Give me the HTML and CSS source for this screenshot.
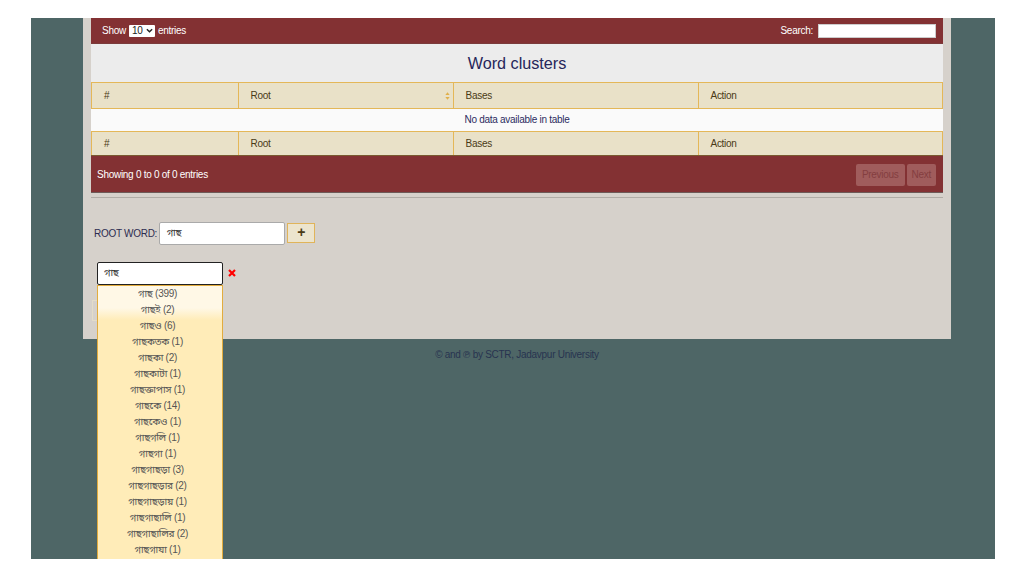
FILE: index.html
```html
<!DOCTYPE html>
<html lang="en">
<head>
<meta charset="utf-8">
<title>Word clusters</title>
<link rel="stylesheet" href="styles.css">
</head>
<body>
<div class="screen">
  <main class="card">
    <div class="toolbar">
      <label class="length">Show <span class="fake-select">10<svg class="chev" viewBox="0 0 8 5" width="7" height="5"><path d="M1 1l3 3 3-3" fill="none" stroke="#222" stroke-width="1.6"/></svg></span> entries</label>
      <label class="search">Search: <span class="search-box"></span></label>
    </div>
    <h1 class="caption">Word clusters</h1>
    <table class="grid">
      <colgroup><col class="c1"><col class="c2"><col class="c3"><col class="c4"></colgroup>
      <thead>
        <tr><th>#</th><th class="sortable">Root<svg class="sort" viewBox="0 0 6 9" width="5" height="8"><path d="M3 0l2.6 3.4H.4zM3 9L.4 5.6h5.2z" fill="#e0b04c"/></svg></th><th>Bases</th><th>Action</th></tr>
      </thead>
      <tbody>
        <tr><td colspan="4">No data available in table</td></tr>
      </tbody>
      <tfoot>
        <tr><th>#</th><th>Root</th><th>Bases</th><th>Action</th></tr>
      </tfoot>
    </table>
    <div class="pager">
      <span class="info">Showing 0 to 0 of 0 entries</span>
      <span class="pages"><span class="page-btn">Previous</span><span class="page-btn">Next</span></span>
    </div>
    <hr class="rule">
    <div class="root-row">
      <label class="root-label">ROOT WORD:</label>
      <span class="root-input">গাছ</span>
      <span class="add-btn">+</span>
    </div>
    <div class="combo">
      <span class="combo-input">গাছ</span>
      <svg class="clear" viewBox="0 0 8 8" width="8" height="8"><path d="M1 1l6 6M7 1L1 7" stroke="#f00" stroke-width="2.2" fill="none"/></svg>
      <ul class="menu">
        <li>গাছ (399)</li>
        <li>গাছই (2)</li>
        <li>গাছও (6)</li>
        <li>গাছকতক (1)</li>
        <li>গাছকা (2)</li>
        <li>গাছকাটা (1)</li>
        <li>গাছক্তাপাস (1)</li>
        <li>গাছকে (14)</li>
        <li>গাছকেও (1)</li>
        <li>গাছগলি (1)</li>
        <li>গাছগা (1)</li>
        <li>গাছগাছড়া (3)</li>
        <li>গাছগাছড়ার (2)</li>
        <li>গাছগাছড়ায় (1)</li>
        <li>গাছগাছালি (1)</li>
        <li>গাছগাছালির (2)</li>
        <li>গাছগাযা (1)</li>
      </ul>
    </div>
    <div class="ghost-btn"></div>
  </main>
  <footer class="credit">© and ℗ by SCTR, Jadavpur University</footer>
</div>
</body>
</html>
```
FILE: styles.css
```css
* { box-sizing: border-box; }
html, body { margin: 0; height: 100%; background: #fff; }
body {
  padding: 18px 29px 17px 31px;
  font-family: "Liberation Sans", "Noto Sans", "Noto Sans Bengali", sans-serif;
  font-size: 10px;
  letter-spacing: -0.28px;
  color: #2a2a55;
  overflow: hidden;
}
.screen {
  height: 541px;
  background: #4e6666;
  overflow: hidden;
  padding-left: 52px;
}
.card {
  position: relative;
  width: 868px;
  height: 321px;
  background: #d6d1cb;
  padding: 0 8px;
}
.toolbar {
  height: 26px;
  background: #833133;
  color: #fff;
  display: flex;
  justify-content: space-between;
  align-items: center;
  padding: 0 7px 1px 11px;
  border-bottom: 1px solid #7a3b3b;
}
.length, .search { display: flex; align-items: center; gap: 3px; }
.fake-select {
  display: inline-flex;
  align-items: center;
  justify-content: space-between;
  width: 26px;
  height: 12px;
  margin-top: 1px;
  background: #fff;
  color: #222;
  padding: 0 2px 0 3px;
  border-radius: 1px;
}
.search { gap: 5px; }
.search-box { width: 118px; height: 14px; margin-top: 1px; background: #fff; border: 1px solid #ccc; }
.caption {
  margin: 0;
  height: 38px;
  background: #ececec;
  color: #26265a;
  font-size: 16.2px;
  letter-spacing: 0;
  font-weight: normal;
  line-height: 38px;
  text-align: center;
}
.grid {
  width: 100%;
  table-layout: fixed;
  border-collapse: collapse;
  background: #fafafa;
}
.c1 { width: 146.5px; }
.c2 { width: 215px; }
.c3 { width: 245px; }
.grid th {
  background: #e9e1c8;
  border: 1px solid #e4b758;
  color: #4a3a16;
  font-weight: normal;
  text-align: left;
  padding: 0 12px;
  height: 26px;
  position: relative;
}
.grid thead th { padding-bottom: 1px; }
.grid tfoot th { height: 24px; border-bottom-color: #7a5a30; }
.grid td {
  height: 23px;
  text-align: center;
  padding: 0 0 1px;
  color: #2c2c60;
}
.sort { position: absolute; right: 3px; top: 9px; }
.pager {
  height: 37px;
  background: #833133;
  color: #fff;
  display: flex;
  justify-content: space-between;
  align-items: center;
  padding: 0 7px 0 6px;
  border-bottom: 1px solid #6e5a58;
}
.pages { display: flex; gap: 2px; padding-top: 2px; }
.page-btn {
  height: 22.5px;
  line-height: 22.5px;
  padding: 0 5px;
  background: #a05c5c;
  color: #843e40;
  border-radius: 2px;
}
.page-btn:first-child { padding: 0 6px; }
.rule { margin: 4px 0 0; border: 0; height: 1px; background: #b0aca6; }
.root-row {
  display: flex;
  align-items: center;
  gap: 1.5px;
  margin: 23px 0 0 3px;
  height: 24px;
}
.root-label { color: #2c2c50; }
.root-input {
  width: 126px;
  height: 23px;
  line-height: 20px;
  background: #fff;
  border: 1px solid #aaa;
  border-radius: 2px;
  padding-left: 7px;
  color: #333;
}
.add-btn {
  width: 28px;
  height: 20px;
  margin-left: 1px;
  line-height: 17px;
  text-align: center;
  background: #ece4cd;
  border: 1px solid #e0b45a;
  color: #4a3a16;
  font-size: 14px;
  font-weight: bold;
}
.combo {
  position: relative;
  display: flex;
  align-items: center;
  margin: 17px 0 0 6px;
  height: 23px;
}
.combo-input {
  width: 126px;
  height: 23px;
  line-height: 20px;
  background: #fff;
  border: 1.5px solid #222;
  border-radius: 2px;
  padding-left: 6px;
  color: #333;
}
.clear { margin: 0 0 2px 5px; }
.menu {
  position: absolute;
  left: 0;
  top: 23px;
  width: 126px;
  height: 274px;
  margin: 0;
  padding: 0 5px 0 0;
  list-style: none;
  background: linear-gradient(#fff8e6 0, #fff8e6 22px, #ffecb8 34px);
  border: 1px solid #e2ac3e;
  border-bottom: 0;
  z-index: 2;
  color: #555;
}
.menu li { height: 16px; line-height: 15px; text-align: center; }
.ghost-btn {
  position: absolute;
  left: 8.5px;
  top: 282px;
  width: 30px;
  height: 21px;
  border: 1px solid #e3dcc9;
}
.credit {
  margin-top: 10px;
  margin-left: -52px;
  text-align: center;
  padding-left: 8px;
  color: #283450;
}
```
